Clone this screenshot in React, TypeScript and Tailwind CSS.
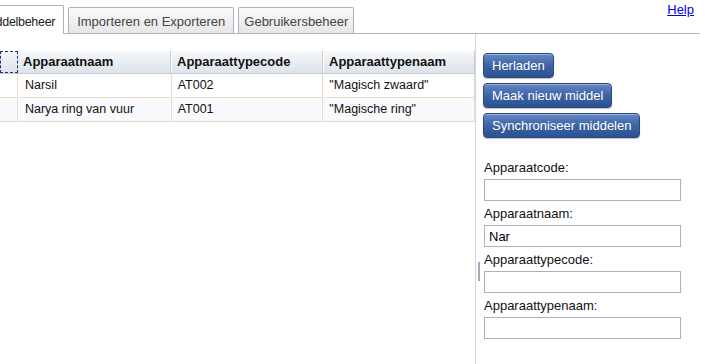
import React from "react";

const rows = [
  { naam: "Narsil", code: "AT002", type: '"Magisch zwaard"' },
  { naam: "Narya ring van vuur", code: "AT001", type: '"Magische ring"' },
];

const fields = [
  { label: "Apparaatcode:", value: "" },
  { label: "Apparaatnaam:", value: "Nar" },
  { label: "Apparaattypecode:", value: "" },
  { label: "Apparaattypenaam:", value: "" },
];

function Tab({ label, smal }: { label: string; smal?: boolean }) {
  return (
    <div
      className={`h-[26px] mr-[4px] ${smal ? "px-[5px]" : "px-[8px]"} pt-[3px] flex items-center border-t border-l border-r border-[#aeb0ba] rounded-t-[2px] bg-gradient-to-b from-[#fafafa] to-[#e6e6e6] text-[13px] text-[#444] whitespace-nowrap`}
    >
      {label}
    </div>
  );
}

function Knop({ label }: { label: string }) {
  return (
    <button className="h-[25px] px-[8px] rounded-[4px] border border-[#28487e] bg-gradient-to-b from-[#6288c6] via-[#3e64a4] to-[#2a5190] text-white text-[13px] leading-none shadow-[inset_0_1px_0_rgba(255,255,255,0.35),0_1px_1px_rgba(0,0,0,0.25)] whitespace-nowrap">
      {label}
    </button>
  );
}

export default function App() {
  return (
    <div className="w-[705px] h-[364px] bg-white overflow-hidden font-['Liberation_Sans',Arial,sans-serif] text-[#111]">
      {/* tabbalk */}
      <div className="w-[700px] h-[34px] flex items-end border-b border-[#b4b5bd]">
        <div className="ml-[-26px] mr-[4px] mb-[-1px] h-[29px] pl-[8px] pr-[8px] pt-[5px] flex items-center bg-white border-t border-l border-r border-[#aeb0ba] rounded-t-[2px] text-[12.5px] tracking-[-0.3px] text-[#222] whitespace-nowrap">
          Middelbeheer
        </div>
        <Tab label="Importeren en Exporteren" />
        <Tab label="Gebruikersbeheer" smal />
        <a
          href="#"
          className="ml-auto self-start mt-[2px] mr-[6px] text-[13px] leading-[15px] text-[#0000ee] underline"
        >
          Help
        </a>
      </div>

      <div className="flex h-[330px]">
        {/* tabel */}
        <div className="w-[476px] border-r border-[#d6d6d6] pt-[17px]">
          <div className="w-[475px] text-[12.5px]">
            <div className="flex h-[23px] bg-gradient-to-b from-[#f7f9fb] to-[#dde3ea] border-b border-[#c3c9d1] font-bold text-[13px] text-[#111]">
              <div className="w-[18px] border border-dashed border-[#1c2f8a]"></div>
              <div className="w-[153px] pl-[5px] flex items-center border-r border-[#c5cbd3]">Apparaatnaam</div>
              <div className="w-[152px] pl-[5px] flex items-center border-r border-[#c5cbd3] border-l border-l-white">Apparaattypecode</div>
              <div className="w-[152px] pl-[5px] flex items-center border-r border-[#c5cbd3] border-l border-l-white">Apparaattypenaam</div>
            </div>
            {rows.map((r, i) => (
              <div key={r.code} className={`flex h-[24px] ${i === 1 ? "bg-[#f8fafd]" : "bg-white"}`}>
                <div className="w-[18px] border-r border-b border-[#e6dcc8]"></div>
                <div className="w-[153px] pl-[6px] flex items-center border-r border-b border-[#e6dcc8] ml-[1px]">{r.naam}</div>
                <div className="w-[151px] pl-[5px] flex items-center border-r border-b border-[#e6dcc8] ml-[1px]">{r.code}</div>
                <div className="w-[151px] pl-[5px] flex items-center border-r border-b border-[#e6dcc8] ml-[1px]">{r.type}</div>
              </div>
            ))}
          </div>
        </div>

        {/* splitter */}
        <div className="w-[7px] pl-[2px] pt-[228px]">
          <div className="w-[2px] h-[19px] bg-[#a3aabf]"></div>
        </div>

        {/* rechterpaneel */}
        <div className="flex-1 pt-[19px]">
          <div className="flex flex-col items-start gap-[5px]">
            <Knop label="Herladen" />
            <Knop label="Maak nieuw middel" />
            <Knop label="Synchroniseer middelen" />
          </div>
          <div className="mt-[22px] pl-[1px]">
            {fields.map((f) => (
              <div key={f.label} className="mb-[5px]">
                <div className="h-[16px] leading-[16px] mb-[3px] text-[13px] text-[#111]">{f.label}</div>
                <input
                  defaultValue={f.value}
                  className="block w-[197px] h-[22px] px-[4px] border border-[#a9b0bf] text-[13px] text-black outline-none"
                />
              </div>
            ))}
          </div>
        </div>
      </div>
    </div>
  );
}
